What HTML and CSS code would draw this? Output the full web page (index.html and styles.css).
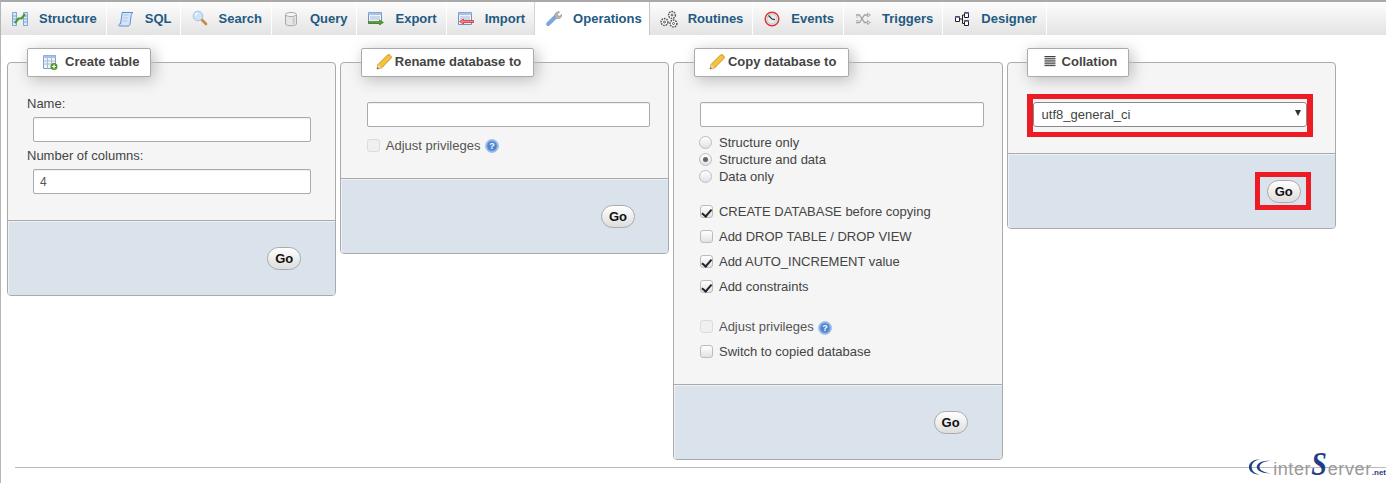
FILE: index.html
```html
<!DOCTYPE html>
<html lang="en">
<head>
<meta charset="utf-8">
<title>Operations</title>
<link rel="stylesheet" href="styles.css">
</head>
<body>
<nav class="tabs">
  <a class="tab"><svg class="ico" viewBox="0 0 16 16"><path d="M.5 1.500h4v13h-4zM11.500 1.500h4v13h-4z" fill="#dbe8f7" stroke="#7fa6d6"/><path d="M.5 5h4M.5 8h4M.5 11h4M11.500 5h4M11.500 8h4M11.500 11h4" stroke="#7fa6d6"/><path d="M3 12l3.500-4.500h3L13 3" fill="none" stroke="#4c9a2a" stroke-width="2.200"/></svg><span>Structure</span></a>
  <a class="tab tab-tight"><svg class="ico" viewBox="0 0 16 16"><path d="M4 1.500h11c-1.500 1-1.800 2.500-2 4l-1 7.500c-.2 1.200-1 2-2 2H1.500c-1 0-1.200-1.500 0-2H2.500L4 3c.1-.8 0-1.500 0-1.500z" fill="#d5e4f7" stroke="#5f8fcf"/><path d="M5.500 4h5M5 7h5M4.500 10h5" stroke="#a9c6ea"/></svg><span>SQL</span></a>
  <a class="tab"><svg class="ico ico-s" viewBox="0 0 16 16"><path d="M9.500 9.500l4.500 4.500" stroke="#c98a3c" stroke-width="2.600" stroke-linecap="round"/><circle cx="6" cy="6" r="4.800" fill="#cfe3f8" stroke="#a5c2df"/><path d="M3.500 5.500a3 3 0 0 1 2.500-2.300" stroke="#fff" fill="none" stroke-width="1.300"/></svg><span>Search</span></a>
  <a class="tab"><svg class="ico" viewBox="0 0 16 16"><path d="M2.500 3.500v9.500c0 2.300 11 2.300 11 0V3.500z" fill="#e6e6e6" stroke="#a9a9a9"/><ellipse cx="8" cy="3.500" rx="5.500" ry="2" fill="#f7f7f7" stroke="#a9a9a9"/><path d="M9.500 6.500h2.500v6.500H9.500z" fill="#cfcfcf"/></svg><span>Query</span></a>
  <a class="tab"><svg class="ico" viewBox="0 0 16 16"><path d="M.5 1.500h13v11H.5z" fill="#eef3fb" stroke="#6e93c8"/><path d="M.5 1.500h13v2.500H.5z" fill="#a9c1e4"/><path d="M2 6h10M2 8h10" stroke="#a7bcd8"/><path d="M.5 10.500h11V9l4 2.500-4 2.500v-1.500H.5z" fill="#58a032" stroke="#2f7a1a" stroke-width=".6"/></svg><span>Export</span></a>
  <a class="tab"><svg class="ico" viewBox="0 0 16 16"><path d="M.5 1.500h13v12H.5z" fill="#eef3fb" stroke="#6e93c8"/><path d="M.5 1.500h13v2.500H.5z" fill="#a9c1e4"/><path d="M2 6h10M2 8h10" stroke="#a7bcd8"/><path d="M15.500 9.500h-10V8L1.500 10.500l4 2.500v-1.500h10z" fill="#f08a8a" stroke="#dd2a2a" stroke-width=".8"/></svg><span>Import</span></a>
  <a class="tab tab-on"><svg class="ico" viewBox="0 0 16 16"><path d="M2.200 13L9.800 5.500" stroke="#7ba7dd" stroke-width="4" stroke-linecap="round"/><path d="M9 6.500c-1-2 0-4.500 2-5.500 1-.4 2-.4 2.800 0L11.500 3l.7 1.800 1.800.5 1.800-2.300c.3 1.500 0 3-1.500 4-1.500.8-3.300.9-4.800 0z" fill="#b5b5b5" stroke="#8b8b8b" stroke-width=".5"/></svg><span>Operations</span></a>
  <a class="tab"><svg class="ico ico-wide" viewBox="0 0 18 18"><g fill="#fff" stroke="#555"><circle cx="12" cy="5" r="3.400" stroke-dasharray="1.600 .9" stroke-width="1.500"/><circle cx="4.500" cy="12" r="3.400" stroke-dasharray="1.600 .9" stroke-width="1.500"/><circle cx="13.500" cy="13.500" r="3.400" stroke-dasharray="1.600 .9" stroke-width="1.500"/><circle cx="12" cy="5" r="1"/><circle cx="4.500" cy="12" r="1"/><circle cx="13.500" cy="13.500" r="1"/></g></svg><span>Routines</span></a>
  <a class="tab"><svg class="ico" viewBox="0 0 16 16"><circle cx="8" cy="8" r="6.800" fill="#fff" stroke="#d8362f" stroke-width="1.500"/><circle cx="8" cy="8" r="5" fill="#e6ebf0" stroke="#9aa6b2" stroke-width=".6"/><path d="M4.500 4.500L8 8l3 .6" fill="none" stroke="#333" stroke-width="1.100"/></svg><span>Events</span></a>
  <a class="tab"><svg class="ico" viewBox="0 0 16 16"><path d="M1 4h3.500l5 7.500H13M1 11.500h3.500l5-7.500H13" fill="none" stroke="#a3a3a3" stroke-width="1.300"/><path d="M12.500 2l3 2-3 2zM12.500 9.500l3 2-3 2z" fill="#e2e2e2" stroke="#999" stroke-width=".7"/><path d="M1 6h2.500M1 9.500h2.500" stroke="#bbb"/></svg><span>Triggers</span></a>
  <a class="tab"><svg class="ico" viewBox="0 0 16 16"><path d="M5.500 8h3M8.500 4v8.500h2M8.500 4h2" fill="none" stroke="#222"/><path d="M1.500 5.500h4v5h-4zM10.500 1.500h4v5h-4zM10.500 9.500h4v5h-4z" fill="#fff" stroke="#222"/><path d="M1.500 5.500h4v1.500h-4zM10.500 1.500h4V3h-4zM10.500 9.500h4V11h-4z" fill="#7d7fc0"/></svg><span>Designer</span></a>
</nav>

<main class="panels">
  <section class="panel">
    <div class="body body-table">
      <h2 class="legend legend-table"><svg class="ico" viewBox="0 0 16 16"><path d="M1.500 1.500h12v13h-12z" fill="#eef3fb" stroke="#7a9fd1"/><path d="M1.500 1.500h12v2.500h-12z" fill="#a9c1e4"/><path d="M1.500 7h12M1.500 10h12M5.500 4v10.500M9.500 4v10.500" stroke="#a7bcd8"/><circle cx="12" cy="12.500" r="3.500" fill="#4c9a2a"/><path d="M10 12.500h4M12 10.500v4" stroke="#fff" stroke-width="1.200"/></svg>Create table</h2>
      <label class="label" for="tname">Name:</label>
      <input class="input input-table" id="tname" type="text">
      <label class="label label-next" for="tcols">Number of columns:</label>
      <input class="input input-table" id="tcols" type="text" value="4">
    </div>
    <div class="foot"><button class="go" type="button">Go</button></div>
  </section>

  <section class="panel">
    <div class="body body-rename">
      <h2 class="legend legend-pencil"><svg class="ico" viewBox="0 0 16 16"><path d="M1 15l1-4.500L11.500 1c.8-.6 1.800-.5 2.500.2l.8.8c.7.7.7 1.700 0 2.500L5.500 14z" fill="#f5c23c" stroke="#c08a24" stroke-width=".9"/><path d="M1 15l1-4.500 3.500 3.500z" fill="#f3d9b0"/><path d="M1 15l.5-2 1.500 1.500z" fill="#555"/></svg>Rename database to</h2>
      <input class="input input-wide" type="text">
      <div class="row row-first">
        <input class="check" type="checkbox" id="rn-adj" disabled>
        <label class="opt-off" for="rn-adj">Adjust privileges</label>
        <svg class="help" viewBox="0 0 14 14"><circle cx="7" cy="7" r="6.500" fill="#8fb6e6" stroke="#a9c4e6"/><circle cx="7" cy="7" r="4.800" fill="#4f86cf"/><text class="help-q" x="7" y="10.200" text-anchor="middle">?</text></svg>
      </div>
    </div>
    <div class="foot foot-rename"><button class="go" type="button">Go</button></div>
  </section>

  <section class="panel">
    <div class="body body-copy">
      <h2 class="legend legend-pencil"><svg class="ico" viewBox="0 0 16 16"><path d="M1 15l1-4.500L11.500 1c.8-.6 1.800-.5 2.500.2l.8.8c.7.7.7 1.700 0 2.500L5.500 14z" fill="#f5c23c" stroke="#c08a24" stroke-width=".9"/><path d="M1 15l1-4.500 3.500 3.500z" fill="#f3d9b0"/><path d="M1 15l.5-2 1.500 1.500z" fill="#555"/></svg>Copy database to</h2>
      <input class="input input-wide input-copy" type="text">
      <div class="radios">
        <div class="radio-row"><input class="radio" type="radio" name="what" id="w1"><label for="w1">Structure only</label></div>
        <div class="radio-row"><input class="radio" type="radio" name="what" id="w2" checked><label for="w2">Structure and data</label></div>
        <div class="radio-row"><input class="radio" type="radio" name="what" id="w3"><label for="w3">Data only</label></div>
      </div>
      <div class="checks">
        <div class="row"><input class="check" type="checkbox" id="c1" checked><label for="c1">CREATE DATABASE before copying</label></div>
        <div class="row"><input class="check" type="checkbox" id="c2"><label for="c2">Add DROP TABLE / DROP VIEW</label></div>
        <div class="row"><input class="check" type="checkbox" id="c3" checked><label for="c3">Add AUTO_INCREMENT value</label></div>
        <div class="row"><input class="check" type="checkbox" id="c4" checked><label for="c4">Add constraints</label></div>
      </div>
      <div class="checks">
        <div class="row"><input class="check" type="checkbox" id="c5" disabled><label class="opt-off" for="c5">Adjust privileges</label>
          <svg class="help" viewBox="0 0 14 14"><circle cx="7" cy="7" r="6.500" fill="#8fb6e6" stroke="#a9c4e6"/><circle cx="7" cy="7" r="4.800" fill="#4f86cf"/><text class="help-q" x="7" y="10.200" text-anchor="middle">?</text></svg>
        </div>
        <div class="row"><input class="check" type="checkbox" id="c6"><label for="c6">Switch to copied database</label></div>
      </div>
    </div>
    <div class="foot"><button class="go" type="button">Go</button></div>
  </section>

  <section class="panel">
    <div class="body body-coll">
      <h2 class="legend legend-coll"><svg class="ico-list" viewBox="0 0 12 12"><path d="M0 .5h12M0 2.500h12M0 4.500h12M0 6.500h12M0 8.500h12M0 10.500h12" stroke="#222"/></svg>Collation</h2>
      <div class="mark mark-select">
        <div class="select-wrap">
          <select class="select"><option>utf8_general_ci</option></select>
        </div>
      </div>
    </div>
    <div class="foot foot-marked"><div class="mark mark-go"><button class="go" type="button">Go</button></div></div>
  </section>
</main>

<hr class="rule">

<div class="logo">
  <svg class="logo-c" viewBox="0 0 26 18"><path d="M13 .5C5 1 1 4.500 1 9s4 8 12 8.500C7 16 4 13 4 9s3-7 9-8.500z" fill="#1f3f86"/><path d="M25 2C15 2 9.500 5 9.500 9s5.500 7 15.500 7C17 15 12.500 12.500 12.500 9S17 3 25 2z" fill="#1f3f86"/></svg>
  <span class="logo-word">inter</span><span class="logo-s">S</span><span class="logo-word">erver</span><span class="logo-net">.net</span>
</div>
</body>
</html>
```

FILE: styles.css
```css
* { box-sizing: border-box; }

html, body {
  margin: 0;
  height: 483px;
  overflow: hidden;
  background: #fff;
}

body {
  position: relative;
  border-top: 2px solid #a9a9a9;
  border-left: 1px solid #b5b5b5;
  font: 13px/15px "Liberation Sans", Arial, sans-serif;
  color: #444;
}

/* tabs */
.tabs {
  display: flex;
  height: 33px;
  background: linear-gradient(#fdfdfd, #e3e3e3);
}

.tab {
  display: flex;
  align-items: center;
  gap: 11px;
  padding: 0 9px 0 11px;
  border-right: 1px solid #fff;
  font-weight: bold;
  color: #235a81;
  white-space: nowrap;
}

.tab-tight { padding-right: 8px; }

.tab-on {
  background: #fff;
  padding-right: 7px;
  border-left: 1px solid #d5d5d5;
  border-right: 1px solid #c8c8c8;
  margin-left: -1px;
}

.ico {
  flex: none;
  width: 16px;
  height: 16px;
}

.ico-s {
  margin-top: -2px;
}

.ico-wide {
  width: 18px;
  height: 18px;
  margin: 0 -1px;
}

/* panels */
.panels {
  display: flex;
  align-items: flex-start;
  gap: 4px;
  padding: 27px 0 0 6px;
}

.panel {
  flex: none;
  width: 329.2px;
  border: 1px solid #aaa;
  border-radius: 4px;
  background: #f5f5f5;
}

.body {
  padding-left: 19px;
}

.body-table { padding-bottom: 26px; }
.body-rename { padding: 0 0 25px 25.6px; }
.body-copy { padding: 0 0 20px 25.6px; }
.body-coll { padding-bottom: 16px; }

.legend {
  display: flex;
  align-items: center;
  width: fit-content;
  height: 29px;
  margin: -15px 0 0;
  padding-bottom: 2px;
  border: 1px solid #aaa;
  border-radius: 2px;
  background: #fff;
  box-shadow: 3px 3px 15px #bbb;
  font-size: 13px;
  font-weight: bold;
  color: #444;
  white-space: nowrap;
}

.legend-table {
  gap: 7px;
  padding-left: 14px;
  padding-right: 11px;
}

.legend-pencil {
  gap: 3px;
  padding-left: 14px;
  padding-right: 12px;
  margin-left: -6px;
}

.legend-coll {
  gap: 6px;
  padding-left: 16px;
  padding-right: 11px;
}

.ico-list {
  width: 12px;
  height: 11px;
}

.label {
  display: block;
  margin-top: 19px;
}

.label-next { margin-top: 6px; }

.input {
  display: block;
  height: 25px;
  margin-top: 6px;
  padding: 0 6px;
  border: 1px solid #aaa;
  border-radius: 2px;
  background: #fff;
  font: 12px "Liberation Sans", Arial, sans-serif;
  color: #555;
  box-shadow: inset 0 1px 1px #f0f0f0;
}

.input-table {
  width: 278px;
  margin-left: 6px;
}

.input-wide {
  width: 283.5px;
  margin-top: 25px;
}

.input-copy { width: 284px; }

/* options */
.row {
  display: flex;
  align-items: center;
  height: 25px;
  gap: 6px;
  white-space: nowrap;
}

.row-first {
  height: 16px;
  margin-top: 10px;
}

.radios { margin-top: 7px; }

.radio-row {
  display: flex;
  align-items: center;
  height: 17px;
  gap: 7px;
  margin-left: -1px;
}

.checks { margin-top: 14px; }
.checks + .checks { margin-top: 15px; }

.opt-off { color: #555; }

.check, .radio {
  appearance: none;
  -webkit-appearance: none;
  position: relative;
  flex: none;
  width: 13px;
  height: 13px;
  margin: 0;
  border: 1px solid #bcbcbc;
  background: linear-gradient(#fff, #e2e2e2);
}

.check { border-radius: 3px; }
.radio { border-radius: 50%; }

.check:disabled {
  background: #f0f0f0;
  border-color: #dcdcdc;
}

.check:checked::before {
  content: "";
  position: absolute;
  left: 3.5px;
  top: .5px;
  width: 3.5px;
  height: 7.5px;
  border: solid #222;
  border-width: 0 2px 2px 0;
  transform: rotate(40deg);
}

.radio:checked::before {
  content: "";
  position: absolute;
  left: 3px;
  top: 3px;
  width: 5px;
  height: 5px;
  border-radius: 50%;
  background: #666;
}

.help {
  flex: none;
  width: 14px;
  height: 14px;
  margin: 2px 0 0 -1.5px;
}

.help-q {
  font: bold 9px "Liberation Sans", Arial, sans-serif;
  fill: #fff;
}

/* footer */
.foot {
  display: flex;
  justify-content: flex-end;
  padding: 26px 34px 25px 0;
  border-top: 1px solid #aaa;
  border-radius: 0 0 3px 3px;
  background: #dae3ec;
  box-shadow: inset 1px 1px 0 #eef1f5;
}

.foot-rename { padding-right: 33.4px; }

.foot-marked {
  padding: 18px 24px 18px 0;
}

.go {
  display: block;
  width: 34px;
  height: 23px;
  padding: 0;
  border: 1px solid #aaa;
  border-radius: 12px;
  background: linear-gradient(#fff, #ddd);
  font: bold 13px "Liberation Sans", Arial, sans-serif;
  color: #111;
}

/* highlight marks */
.mark {
  border: solid #ed1c24;
}

.mark-select {
  width: 286px;
  margin-top: 17px;
  padding: 3px 0 5px;
  border-width: 5px 6px;
}

.mark-go {
  padding: 3px 5px 2px 7px;
  border-width: 5px;
}

.select-wrap {
  position: relative;
}

.select-wrap::after {
  content: "";
  position: absolute;
  right: 6px;
  top: 8px;
  border: 3.5px solid transparent;
  border-top: 6px solid #333;
  border-bottom: 0;
}

.select {
  appearance: none;
  -webkit-appearance: none;
  display: block;
  width: 100%;
  height: 25px;
  padding: 0 8px;
  border: 1px solid #888;
  border-radius: 3px;
  background: #fff;
  font: 13px "Liberation Sans", Arial, sans-serif;
  color: #444;
}

/* bottom */
.rule {
  height: 1px;
  margin: 7px 0 0 14px;
  border: 0;
  background: #bbb;
}

.logo {
  position: absolute;
  right: 0;
  bottom: 4px;
  display: flex;
  align-items: baseline;
  color: #9a9a9a;
}

.logo-c {
  align-self: flex-end;
  width: 24px;
  height: 18px;
  margin: 0 1px 3px 0;
}

.logo-word {
  font: 18px/20px "Liberation Sans", Arial, sans-serif;
  letter-spacing: .6px;
}

.logo-s {
  display: inline-block;
  margin-right: 1px;
  font: italic bold 28px/20px "Liberation Serif", serif;
  color: #1f3f86;
  transform-origin: bottom;
  transform: scaleY(1.2);
}

.logo-net {
  font: bold 8px/10px "Liberation Sans", Arial, sans-serif;
  color: #1f3f86;
}
```
